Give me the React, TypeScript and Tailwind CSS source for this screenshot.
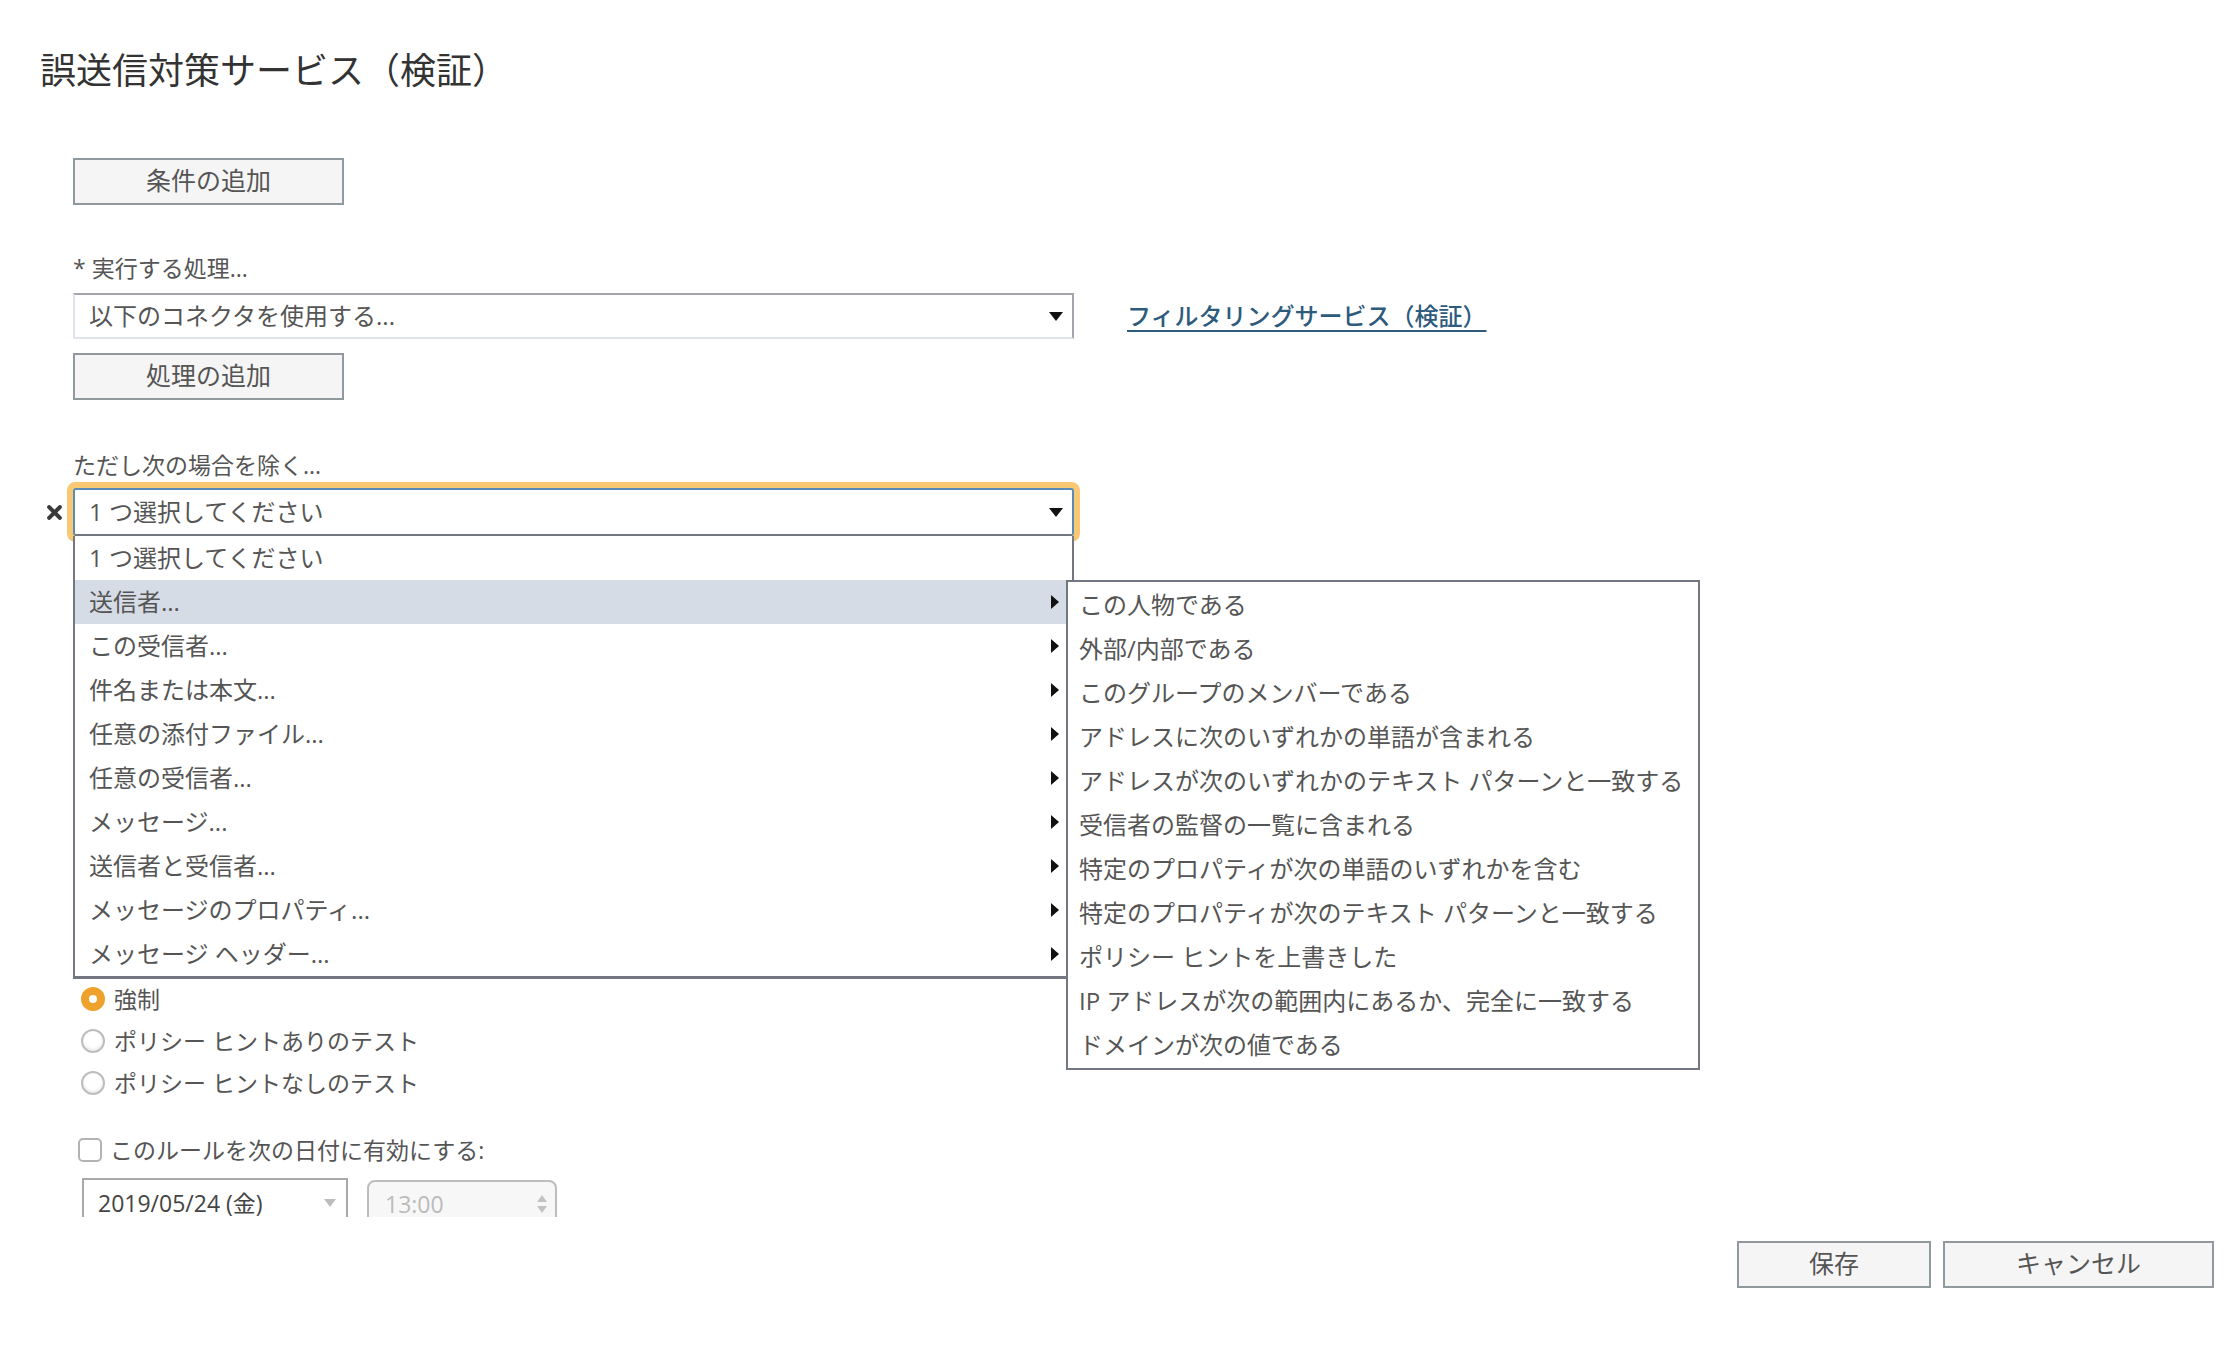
import React from 'react';

const FONT = "font-['Open_Sans','Noto_Sans_CJK_JP',sans-serif]";

const mainItems = [
  '1 つ選択してください',
  '送信者...',
  'この受信者...',
  '件名または本文...',
  '任意の添付ファイル...',
  '任意の受信者...',
  'メッセージ...',
  '送信者と受信者...',
  'メッセージのプロパティ...',
  'メッセージ ヘッダー...',
];

const subItems = [
  'この人物である',
  '外部/内部である',
  'このグループのメンバーである',
  'アドレスに次のいずれかの単語が含まれる',
  'アドレスが次のいずれかのテキスト パターンと一致する',
  '受信者の監督の一覧に含まれる',
  '特定のプロパティが次の単語のいずれかを含む',
  '特定のプロパティが次のテキスト パターンと一致する',
  'ポリシー ヒントを上書きした',
  'IP アドレスが次の範囲内にあるか、完全に一致する',
  'ドメインが次の値である',
];

const modes = ['強制', 'ポリシー ヒントありのテスト', 'ポリシー ヒントなしのテスト'];

function DownArrow() {
  return (
    <svg width="14" height="9" viewBox="0 0 14 9" className="shrink-0">
      <path d="M0 0 H14 L7 9 Z" fill="#111" />
    </svg>
  );
}

function RightArrow() {
  return (
    <svg width="8" height="14" viewBox="0 0 8 14" className="shrink-0">
      <path d="M0 0 L8 7 L0 14 Z" fill="#111" />
    </svg>
  );
}

function GrayButton({ label, w }: { label: string; w: string }) {
  return (
    <button
      className={`${w} h-[47px] border-2 border-[#8f999e] bg-[#f5f5f5] pb-[3px] text-[25px] leading-none text-[#555]`}
    >
      {label}
    </button>
  );
}

export default function App() {
  return (
    <div className={`${FONT} flex h-[1354px] w-[2240px] flex-col bg-white text-[#555]`}>
      <div className="h-[1217px] overflow-hidden">
        <h1 className="pl-[40px] pt-[47px] text-[36px] leading-[48px] text-[#333]">
          誤送信対策サービス（検証）
        </h1>

        <div className="pl-[73px]">
          <div className="mt-[63px]">
            <GrayButton label="条件の追加" w="w-[271px]" />
          </div>

          <div className="mt-[47px] text-[23px] leading-[32px]">* 実行する処理...</div>
          <div className="mt-[9px] flex items-center gap-[53px]">
            <div className="flex h-[46px] w-[1001px] items-center justify-between border-2 border-t-[#a3a4ac] border-r-[#a3a4ac] border-b-[#dfe3ea] border-l-[#dfe3ea] bg-white pl-[14px] pr-[9px]">
              <span className="text-[24px]">以下のコネクタを使用する...</span>
              <DownArrow />
            </div>
            <a className="text-[24px] font-medium text-[#2e5b7c] underline decoration-2 underline-offset-[5px]">
              フィルタリングサービス（検証）
            </a>
          </div>

          <div className="mt-[14px]">
            <GrayButton label="処理の追加" w="w-[271px]" />
          </div>

          <div className="mt-[49px] text-[23px] leading-[32px]">ただし次の場合を除く...</div>

          <div className="-ml-[30px] mt-[7px] flex items-center">
            <div className="flex w-[30px] justify-center pr-[8px]">
              <svg width="15" height="15" viewBox="0 0 14 14">
                <path d="M2 2 L12 12 M12 2 L2 12" stroke="#3a3a3a" strokeWidth="3.8" strokeLinecap="round" />
              </svg>
            </div>
            <div className="relative w-[1001px]">
              <div className="flex h-[48px] items-center justify-between rounded-[3px] border-2 border-[#5a8bb6] border-b-[#727782] bg-white pl-[14px] pr-[9px] shadow-[0_0_0_6px_#f8c874]">
                <span className="text-[24px]">1 つ選択してください</span>
                <DownArrow />
              </div>

              <div className="absolute left-0 top-full z-10 w-[1001px] border-x-2 border-b-[3px] border-[#727782] bg-white">
                {mainItems.map((t, i) => (
                  <div
                    key={t}
                    className={`flex h-[44px] items-center justify-between pl-[14px] pr-[13px] text-[24px] ${
                      i === 1 ? 'bg-[#d5dce5]' : ''
                    }`}
                  >
                    <span>{t}</span>
                    {i > 0 && <RightArrow />}
                  </div>
                ))}

                <div className="absolute left-[991px] top-[44px] z-20 w-[634px] border-2 border-[#727782] bg-white py-[1px]">
                  {subItems.map((t) => (
                    <div key={t} className="flex h-[44px] items-center pl-[11px] text-[24px]">
                      {t}
                    </div>
                  ))}
                </div>
              </div>
            </div>
          </div>

          {/* space taken by the form rows that the open menu covers */}
          <div className="h-[442px]" aria-hidden="true" />

          <div className="pl-[8px]">
            {modes.map((m, i) => (
              <div key={m} className="flex h-[42px] items-center gap-[9px] text-[23px]">
                {i === 0 ? (
                  <span className="flex h-[24px] w-[24px] items-center justify-center rounded-full bg-[#eea12b]">
                    <span className="h-[8px] w-[8px] rounded-full bg-white" />
                  </span>
                ) : (
                  <span className="h-[24px] w-[24px] rounded-full border-2 border-[#bdbdbd] bg-white shadow-[inset_0_-2px_3px_rgba(0,0,0,0.08)]" />
                )}
                <span>{m}</span>
              </div>
            ))}
          </div>

          <div className="mt-[28px] flex h-[36px] items-center gap-[8px] pl-[5px] text-[23px]">
            <span className="h-[24px] w-[24px] rounded-[5px] border-2 border-[#b3b3b3] bg-white" />
            <span>このルールを次の日付に有効にする:</span>
          </div>

          <div className="mt-[10px] flex gap-[19px] pl-[9px]">
            <div className="flex h-[48px] w-[266px] items-center justify-between border-2 border-b-0 border-[#a9a9a9] pl-[14px] pr-[10px] text-[23px] text-[#444]">
              <span>2019/05/24 (金)</span>
              <svg width="12" height="8" viewBox="0 0 12 8">
                <path d="M0 0 H12 L6 8 Z" fill="#bdbdbd" />
              </svg>
            </div>
            <div className="mt-[2px] flex h-[48px] w-[190px] items-center justify-between rounded-[8px] border-2 border-[#bdbdbd] bg-[#f7f7f7] pl-[16px] pr-[8px] text-[23px] text-[#bbb]">
              <span>13:00</span>
              <svg width="10" height="20" viewBox="0 0 10 20">
                <path d="M0 8 L5 1 L10 8 Z M0 12 L5 19 L10 12 Z" fill="#c2c2c2" />
              </svg>
            </div>
          </div>
        </div>
      </div>

      <div className="flex justify-end gap-[12px] pr-[26px] pt-[24px]">
        <GrayButton label="保存" w="w-[194px]" />
        <GrayButton label="キャンセル" w="w-[271px]" />
      </div>
    </div>
  );
}
